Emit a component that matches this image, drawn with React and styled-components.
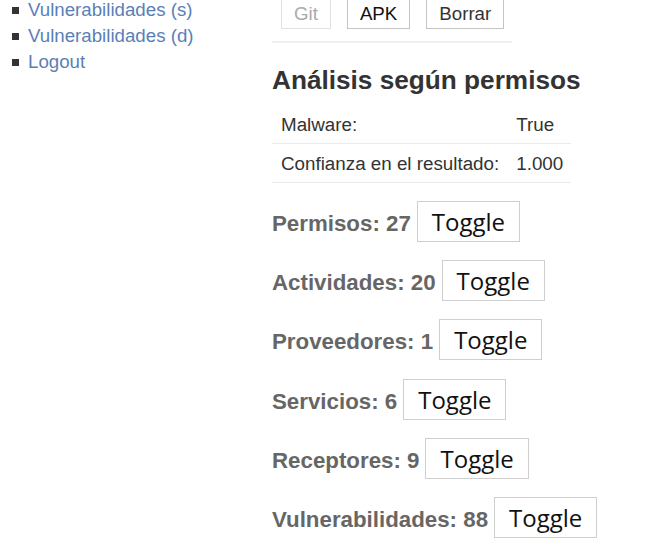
import styled, { createGlobalStyle } from "styled-components";

const GlobalStyle = createGlobalStyle`
  body {
    margin: 0;
    background: #fff;
    font-family: "Liberation Sans", Arial, sans-serif;
    color: #333;
  }
`;

const sideLinks = ["Vulnerabilidades (s)", "Vulnerabilidades (d)", "Logout"];

const counts = [
  ["Permisos", 27],
  ["Actividades", 20],
  ["Proveedores", 1],
  ["Servicios", 6],
  ["Receptores", 9],
  ["Vulnerabilidades", 88],
];

const App = () => {
  return (
    <Page>
      <GlobalStyle />
      <Sidebar>
        <NavList>
          {sideLinks.map((l) => (
            <NavItem key={l}>
              <NavLink href="#">{l}</NavLink>
            </NavItem>
          ))}
        </NavList>
      </Sidebar>
      <Main>
        <ButtonBar>
          <ActionButton disabled>Git</ActionButton>
          <ActionButton strong>APK</ActionButton>
          <ActionButton>Borrar</ActionButton>
        </ButtonBar>

        <Heading>Análisis según permisos</Heading>
        <ResultTable>
          <tbody>
            <tr>
              <Cell>Malware:</Cell>
              <Cell>True</Cell>
            </tr>
            <tr>
              <Cell>Confianza en el resultado:</Cell>
              <Cell>1.000</Cell>
            </tr>
          </tbody>
        </ResultTable>

        <Sections>
          {counts.map(([name, n]) => (
            <SectionRow key={name}>
              <SectionTitle>
                {name}: {n}
              </SectionTitle>
              <ToggleButton>Toggle</ToggleButton>
            </SectionRow>
          ))}
        </Sections>
      </Main>
    </Page>
  );
};

const Page = styled.div`
  display: grid;
  grid-template-columns: 272px 1fr;
  align-items: start;
  margin-top: -11px;
`;

const Sidebar = styled.aside`
  padding-top: 8px;
`;

const NavList = styled.ul`
  list-style: none;
  margin: 0;
  padding: 0 0 0 12px;
`;

const NavItem = styled.li`
  display: flex;
  align-items: center;
  height: 26px;
  font-size: 18.7px;

  &::before {
    content: "";
    width: 7px;
    height: 7px;
    background: #333;
    margin-right: 9px;
    flex-shrink: 0;
  }
`;

const NavLink = styled.a`
  color: #5a7fb7;
  text-decoration: none;
`;

const Main = styled.main`
  display: flex;
  flex-direction: column;
  align-items: flex-start;
`;

const ButtonBar = styled.div`
  display: flex;
  gap: 16px;
  width: 240px;
  box-sizing: border-box;
  padding: 9px 8px 12px 9px;
  border-bottom: 2px solid #efefef;
`;

const ActionButton = styled.button`
  height: 31px;
  padding: 0 12px;
  font-family: "Liberation Sans", Arial, sans-serif;
  font-size: 18.7px;
  background: #fff;
  color: ${(p) => (p.disabled ? "#aaa" : p.strong ? "#111" : "#333")};
  border: 1px solid ${(p) => (p.disabled ? "#e2e2e2" : "#c4c4c4")};
  border-radius: 0;
`;

const Heading = styled.h2`
  margin: 23px 0 10px;
  font-size: 26.2px;
  line-height: 29px;
  font-weight: bold;
  color: #333;
`;

const ResultTable = styled.table`
  border-collapse: collapse;
  font-size: 18.8px;
  color: #333;
`;

const Cell = styled.td`
  padding: 8.5px 8px 8.5px 9px;
  line-height: 21px;
  border-bottom: 1px solid #ebebeb;
`;

const Sections = styled.div`
  display: flex;
  flex-direction: column;
  gap: 18.2px;
  margin-top: 18px;
`;

const SectionRow = styled.div`
  display: flex;
  align-items: baseline;
  gap: 6px;
`;

const SectionTitle = styled.h4`
  margin: 0;
  font-size: 22.3px;
  font-weight: bold;
  color: #666;
`;

const ToggleButton = styled.button`
  height: 41px;
  padding: 0 14px;
  font-family: "Open Sans", "DejaVu Sans", sans-serif;
  font-size: 24px;
  color: #111;
  background: #fff;
  border: 1px solid #cfcfcf;
  border-radius: 0;
`;

export default App;
